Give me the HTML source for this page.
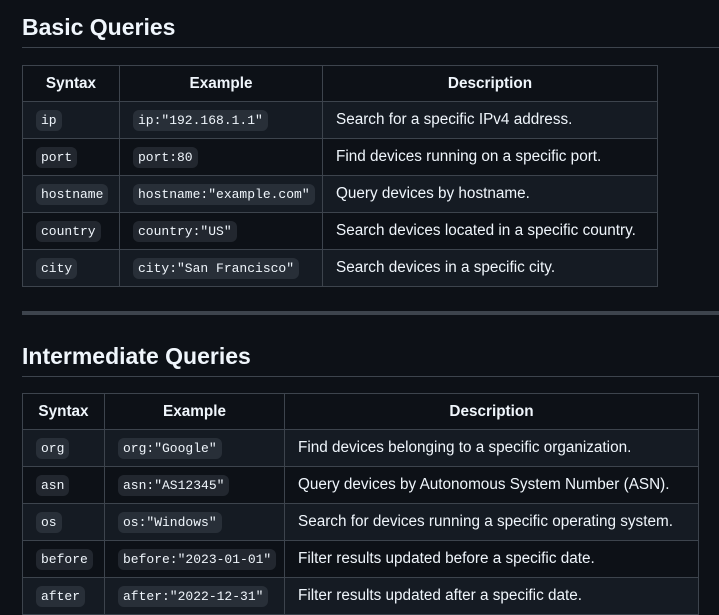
<!DOCTYPE html>
<html><head><meta charset="utf-8"><style>
body{margin:0;background:#0d1117;color:#f0f6fc;font-family:"Liberation Sans",sans-serif;font-size:16px;width:719px;height:600px;overflow:hidden;position:relative}
h2{position:absolute;left:22px;margin:0;font-size:23px;font-weight:600;width:720px;border-bottom:1px solid #3d444d;}
table{position:absolute;left:22px;border-collapse:collapse;table-layout:fixed}
td,th{border:1px solid #3d444d;padding:0 13px;height:37px;box-sizing:border-box;white-space:nowrap;font-size:15.3px}
th{font-weight:bold;text-align:center;height:36px}
tr:nth-child(2n) td{background:#151b23}
code{font-family:"Liberation Mono","DejaVu Sans Mono",monospace;font-size:13px;background:rgba(101,108,118,0.25);border-radius:6px;padding:3px 5px}
.hr{position:absolute;left:22px;top:311px;width:700px;height:4px;background:#3d444d}
</style></head><body>
<h2 style="top:14px;height:33px;">Basic Queries</h2>
<table style="top:65px;width:635px">
<colgroup><col style="width:97px"><col style="width:203px"><col style="width:335px"></colgroup>
<tr><th>Syntax</th><th>Example</th><th>Description</th></tr>
<tr><td><code>ip</code></td><td><code>ip:"192.168.1.1"</code></td><td>Search for a specific IPv4 address.</td></tr>
<tr><td><code>port</code></td><td><code>port:80</code></td><td>Find devices running on a specific port.</td></tr>
<tr><td><code>hostname</code></td><td><code>hostname:"example.com"</code></td><td>Query devices by hostname.</td></tr>
<tr><td><code>country</code></td><td><code>country:"US"</code></td><td>Search devices located in a specific country.</td></tr>
<tr><td><code>city</code></td><td><code>city:"San Francisco"</code></td><td>Search devices in a specific city.</td></tr>
</table>
<div class="hr"></div>
<h2 style="top:343px;height:33px;">Intermediate Queries</h2>
<table style="top:393px;width:676px">
<colgroup><col style="width:82px"><col style="width:180px"><col style="width:414px"></colgroup>
<tr><th>Syntax</th><th>Example</th><th>Description</th></tr>
<tr><td><code>org</code></td><td><code>org:"Google"</code></td><td>Find devices belonging to a specific organization.</td></tr>
<tr><td><code>asn</code></td><td><code>asn:"AS12345"</code></td><td>Query devices by Autonomous System Number (ASN).</td></tr>
<tr><td><code>os</code></td><td><code>os:"Windows"</code></td><td>Search for devices running a specific operating system.</td></tr>
<tr><td><code>before</code></td><td><code>before:"2023-01-01"</code></td><td>Filter results updated before a specific date.</td></tr>
<tr><td><code>after</code></td><td><code>after:"2022-12-31"</code></td><td>Filter results updated after a specific date.</td></tr>
</table>
</body></html>
